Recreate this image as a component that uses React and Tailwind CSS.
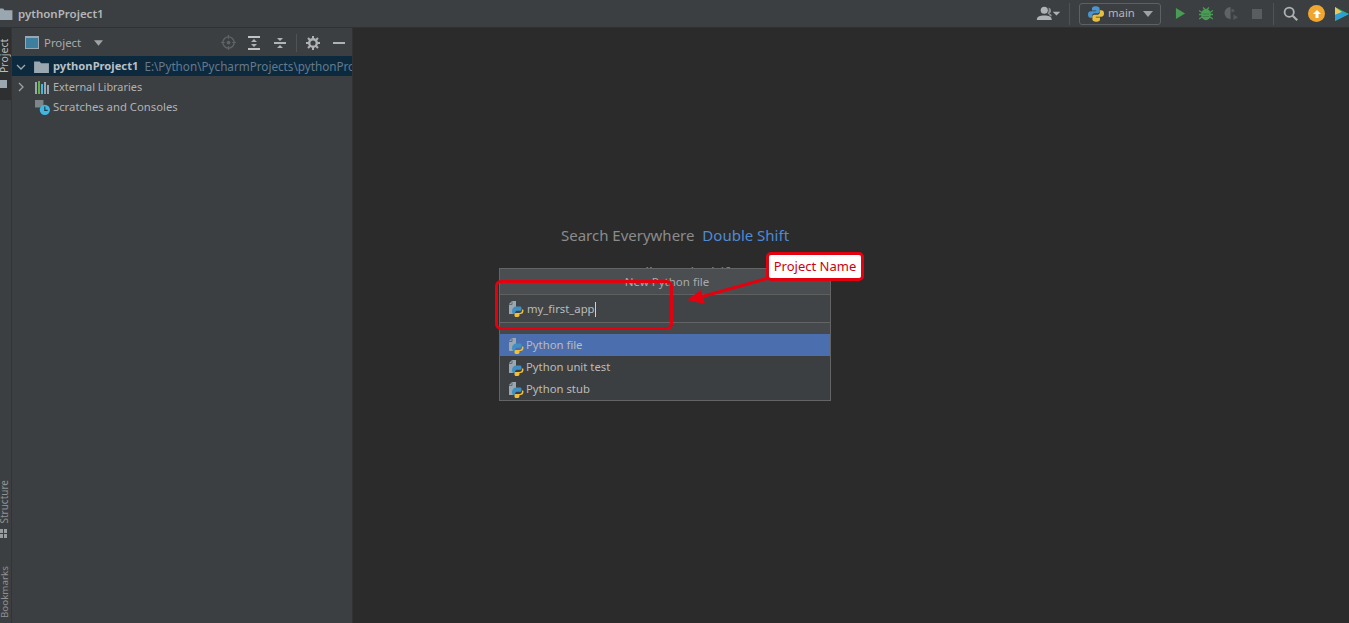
const font = { fontFamily: '"Noto Sans", sans-serif' }

const Folder = ({ className }) => (
    <svg viewBox="0 0 16 14" className={`shrink-0 ${className}`}>
        <path d="M0 1.5h6l1.5 2H16V14H0z" fill="#9aa7b0" />
    </svg>
)

const PyBadge = ({ className }) => (
    <svg viewBox="0 0 16 16" className={`shrink-0 ${className}`}>
        <path d="M1 3l3-3h4v6H6v7H1z" fill="#9aa7b0" />
        <path d="M4 .5v3H1" fill="none" stroke="#5f6a72" strokeWidth="1" />
        <path d="M4 10c0-3 2-4.500 5-4.500h3c1 0 1.500 .6 1.500 1.500v1.500c0 .8-.6 1.300-1.500 1.300H8.500C7.500 10.300 7 11 7 12v1H5.500C4.500 13 4 11.500 4 10z" fill="#3f8fc4" />
        <path d="M15.500 9c0 1-.2 3-1.200 3.500-.8.400-1.800.5-2.800.5v1.200c0 1-.8 1.800-2.200 1.800H8c-1 0-1.500-.6-1.500-1.500v-1c0-1 .6-1.500 1.500-1.500h3.500c1.200 0 2.500-.8 2.500-2.500V8.500h.5c.6 0 1 .2 1 .5z" fill="#f2c037" />
    </svg>
)

const PythonLogo = () => (
    <svg viewBox="0 0 16 16" className="h-[16px] w-[16px] shrink-0">
        <path d="M8 .3c-3.300 0-4 1.300-4 2.500v1.700h4.200v.8H2.800C1.300 5.300 0 6.300 0 8.500s1.200 3.300 2.500 3.300h1.700V9.700c0-1.400 1.100-2.400 2.400-2.400h3c1.100 0 2-.9 2-2V2.800C11.600 1.200 10.300 .3 8 .3z" fill="#4a95cf" />
        <path d="M8 15.700c3.300 0 4-1.300 4-2.500v-1.700H7.800v-.8h5.400c1.500 0 2.800-1 2.800-3.200S14.800 4.200 13.500 4.200h-1.700v2.100c0 1.400-1.100 2.400-2.400 2.400h-3c-1.100 0-2 .9-2 2v2.500c0 1.600 1.300 2.500 3.600 2.500z" fill="#e8c03e" />
    </svg>
)

const popupItems = ["Python file", "Python unit test", "Python stub"]

export default function App() {
    return (
        <div className="flex h-[623px] w-[1349px] flex-col overflow-hidden bg-[#3c3f41] text-[#bbbbbb]" style={font}>
            {/* Title bar */}
            <div className="flex h-[28px] shrink-0 items-center border-b border-[#2f3133] bg-[#3c3f41]">
                <Folder className="ml-[-4px] h-[13px] w-[18px]" />
                <span className="ml-[4px] text-[11.5px] font-semibold text-[#b4b6b8]">pythonProject1</span>
                <div className="ml-auto flex items-center">
                    <svg viewBox="0 0 25 16" className="h-[15px] w-[25px]">
                        <circle cx="8" cy="4.500" r="3.800" fill="#aeb2b5" />
                        <path d="M0 15c0-4 3-5 8-5s8 1 8 5z" fill="#aeb2b5" />
                        <path d="M12.500 1.500a3.500 3.500 0 0 1 1 6.500c1.500 .5 2.500 1.500 2.500 3h-2c-.5-1.500-1.500-2.500-2.500-3 1-1.500 1.500-4 1-6.500z" fill="#8c9093" />
                        <path d="M17 6h8l-4 4z" fill="#aeb2b5" />
                    </svg>
                    <div className="ml-[8px] h-[22px] w-px bg-[#505355]" />
                    <div className="ml-[9px] flex h-[22px] w-[82px] items-center rounded-[3px] border border-[#5e6163] pl-[8px]">
                        <PythonLogo />
                        <span className="ml-[4px] text-[11.300px] text-[#b4b6b8]">main</span>
                        <svg viewBox="0 0 10 6" className="ml-[8px] h-[6px] w-[10px]">
                            <path d="M0 0h10L5 6z" fill="#9ea2a5" />
                        </svg>
                    </div>
                    <svg viewBox="0 0 12 14" className="ml-[14px] h-[13px] w-[11px]">
                        <path d="M1 1l10 6-10 6z" fill="#499c54" />
                    </svg>
                    <svg viewBox="0 0 14 14" className="ml-[13px] h-[15px] w-[14px]">
                        <ellipse cx="7" cy="8" rx="4.800" ry="5.800" fill="#499c54" />
                        <path d="M0 4l3 2M14 4l-3 2M0 8h3M14 8h-3M0 12.500l3-2M14 12.500l-3-2M4 1l2 2M10 1L8 3" stroke="#499c54" strokeWidth="1.300" />
                        <path d="M4 7.500h6M4 10h6" stroke="#3a6f45" strokeWidth=".7" />
                    </svg>
                    <svg viewBox="0 0 16 16" className="ml-[11px] h-[15px] w-[15px]">
                        <path d="M7 1a6 6 0 1 0 0 13z" fill="#5f6365" />
                        <path d="M8 3c2 0 3 1 3.500 2.500L8 7z" fill="#54585a" />
                        <path d="M10 9l5 3-5 3z" fill="#54585a" />
                    </svg>
                    <div className="ml-[13px] h-[10px] w-[10px] bg-[#5a5d5f]" />
                    <div className="ml-[11px] h-[22px] w-px bg-[#505355]" />
                    <svg viewBox="0 0 14 14" className="ml-[9px] h-[15px] w-[15px]">
                        <circle cx="5.800" cy="5.800" r="4.300" fill="none" stroke="#afb1b3" strokeWidth="1.700" />
                        <path d="M9 9l4.300 4.300" stroke="#afb1b3" strokeWidth="2" />
                    </svg>
                    <div className="ml-[10px] flex h-[17px] w-[17px] items-center justify-center rounded-full bg-[#f0a732]">
                        <svg viewBox="0 0 10 10" className="h-[10px] w-[10px]">
                            <path d="M5 1l4 4H6.500v4h-3V5H1z" fill="#ffffff" />
                        </svg>
                    </div>
                    <svg viewBox="0 0 14 16" className="ml-[10px] h-[16px] w-[14px]">
                        <path d="M0 1l14 7-14 7z" fill="#21b573" />
                        <path d="M0 1l7 5-7 3z" fill="#f0c85a" />
                        <path d="M0 9l7-3 7 2-14 7z" fill="#2f9fd8" />
                    </svg>
                </div>
            </div>

            <div className="flex min-h-0 flex-1">
                {/* Left tool stripe */}
                <div className="flex w-[12px] shrink-0 flex-col justify-between overflow-hidden border-r border-[#323436]">
                    <div className="flex h-[72px] w-[11px] flex-col items-start overflow-hidden bg-[#2d2f30] pt-[12px]">
                        <span className="h-[33px] rotate-180 whitespace-nowrap text-[10.500px] leading-[9px] text-[#bbbbbb] [writing-mode:vertical-rl]">Project</span>
                        <div className="mt-[7px] h-[8px] w-[7px] bg-[#9aa7b0]" />
                    </div>
                    <div className="mb-[5px] flex flex-col items-start">
                        <span className="rotate-180 whitespace-nowrap text-[10px] leading-[9px] text-[#8f9294] [writing-mode:vertical-rl]">Structure</span>
                        <div className="mt-[5px] grid w-[7px] grid-cols-2 gap-px">
                            <div className="h-[4px] bg-[#9a9d9f]" />
                            <div className="h-[4px] bg-[#9a9d9f]" />
                            <div className="h-[4px] bg-[#9a9d9f]" />
                            <div className="h-[4px] bg-[#9a9d9f]" />
                        </div>
                        <span className="mt-[28px] rotate-180 whitespace-nowrap text-[9.800px] leading-[9px] text-[#8f9294] [writing-mode:vertical-rl]">Bookmarks</span>
                    </div>
                </div>

                {/* Project panel */}
                <div className="flex w-[340px] shrink-0 flex-col overflow-hidden bg-[#3c3f41]">
                    <div className="flex h-[28px] shrink-0 items-center pl-[13px] pt-[1px]">
                        <div className="h-[13px] w-[14px] border border-[#9aa7b0] border-t-2 bg-[#3d7f9e]" />
                        <span className="ml-[5px] text-[11.400px] text-[#a9abad]">Project</span>
                        <svg viewBox="0 0 10 6" className="ml-[13px] h-[6px] w-[9px]">
                            <path d="M0 0h10L5 6z" fill="#a0a3a5" />
                        </svg>
                        <div className="ml-auto flex items-center pr-[7px]">
                            <svg viewBox="0 0 16 16" className="h-[15px] w-[15px]">
                                <circle cx="8" cy="8" r="6" fill="none" stroke="#5f6365" strokeWidth="1.500" />
                                <circle cx="8" cy="8" r="2" fill="#5f6365" />
                                <path d="M8 0v4M8 12v4M0 8h4M12 8h4" stroke="#5f6365" strokeWidth="1.300" />
                            </svg>
                            <svg viewBox="0 0 14 14" className="ml-[11px] h-[14px] w-[14px]">
                                <path d="M1 1h12M1 13h12" stroke="#c0c2c4" strokeWidth="1.800" />
                                <path d="M7 3l3 3H4zM7 11l3-3H4z" fill="#afb1b3" />
                            </svg>
                            <svg viewBox="0 0 14 14" className="ml-[12px] h-[14px] w-[14px]">
                                <path d="M1 7h12" stroke="#c0c2c4" strokeWidth="1.800" />
                                <path d="M7 5L4 2h6zM7 9l3 3H4z" fill="#afb1b3" />
                            </svg>
                            <div className="ml-[9px] h-[18px] w-px bg-[#505355]" />
                            <svg viewBox="0 0 14 14" className="ml-[9px] h-[14px] w-[14px]">
                                <circle cx="7" cy="7" r="3.800" fill="none" stroke="#afb1b3" strokeWidth="2.400" />
                                <path d="M7 0v3M7 11v3M0 7h3M11 7h3M2 2l2 2M10 10l2 2M12 2l-2 2M4 10l-2 2" stroke="#afb1b3" strokeWidth="2" />
                            </svg>
                            <div className="ml-[13px] h-[2px] w-[12px] bg-[#afb1b3]" />
                        </div>
                    </div>
                    <div className="flex h-[20px] shrink-0 items-center whitespace-nowrap bg-[#0d293e] pl-[4px] pt-[1px] text-[11.200px]">
                        <svg viewBox="0 0 10 6" className="h-[6px] w-[10px] shrink-0">
                            <path d="M1 1l4 4 4-4" fill="none" stroke="#a0a8ae" strokeWidth="1.300" />
                        </svg>
                        <Folder className="ml-[8px] h-[13px] w-[15px]" />
                        <span className="ml-[4px] font-bold text-[#b9c0c6]">pythonProject1</span>
                        <span className="ml-[6px] text-[11.700px] text-[#66798a]">E:\Python\PycharmProjects\pythonProject1</span>
                    </div>
                    <div className="flex h-[20px] shrink-0 items-center pl-[6px] pt-[2px] text-[10.900px]">
                        <svg viewBox="0 0 6 10" className="h-[10px] w-[6px] shrink-0">
                            <path d="M1 1l4 4-4 4" fill="none" stroke="#a0a3a5" strokeWidth="1.300" />
                        </svg>
                        <div className="ml-[11px] flex h-[13px] items-end gap-[1px]">
                            <div className="h-[12px] w-[2px] bg-[#9aa7b0]" />
                            <div className="h-[13px] w-[2px] bg-[#62b543]" />
                            <div className="h-[10px] w-[2px] bg-[#40b6e0]" />
                            <div className="h-[12px] w-[2px] bg-[#9aa7b0]" />
                            <div className="h-[9px] w-[2px] bg-[#9aa7b0]" />
                        </div>
                        <span className="ml-[4px] text-[#b0b2b4]">External Libraries</span>
                    </div>
                    <div className="flex h-[20px] shrink-0 items-center pl-[23px] pt-[2px] text-[11.300px]">
                        <svg viewBox="0 0 16 16" className="h-[15px] w-[15px] shrink-0">
                            <path d="M0 0h9v8H0z" fill="#7d8689" />
                            <circle cx="10.500" cy="10.500" r="5.500" fill="#40b6e0" />
                            <path d="M10.500 7v4h3" fill="none" stroke="#1f3a48" strokeWidth="1.200" />
                        </svg>
                        <span className="ml-[3px] text-[#b0b2b4]">Scratches and Consoles</span>
                    </div>
                </div>

                {/* Editor */}
                <div className="relative min-w-0 flex-1 border-l border-[#323232] bg-[#2b2b2b]">
                    <div className="flex flex-col items-center pr-[352px] pt-[196px] text-[15px] leading-[22px] text-[#8a8c8e]">
                        <div className="whitespace-nowrap">
                            Search Everywhere <span className="ml-[4px] text-[#4f8ad6]">Double Shift</span>
                        </div>
                        <div className="mt-[15px] whitespace-nowrap">
                            Go to File <span className="ml-[4px] text-[#4f8ad6]">Ctrl+Shift+N</span>
                        </div>
                    </div>

                    {/* New file popup */}
                    <div className="absolute left-[146px] top-[240px] w-[332px] border border-[#646464] bg-[#3c3f41] text-[11.300px]">
                        <div className="flex h-[26px] items-center justify-center border-b border-[#5e6060] bg-[#4b4e50] pl-[4px] text-[11.500px] text-[#a8aaac]">New Python file</div>
                        <div className="flex h-[28px] items-center border-b border-[#646464] bg-[#414446] pl-[8px] pt-[1px] text-[#bbbbbb]">
                            <PyBadge className="h-[16px] w-[16px]" />
                            <span className="ml-[3px]">my_first_app</span>
                            <div className="h-[15px] w-px bg-[#d0d0d0]" />
                        </div>
                        <div className="h-[11px] bg-[#46494b]" />
                        {popupItems.map((item, i) => (
                            <div key={item} className={`flex h-[22px] items-center pl-[8px] pt-[1px] ${i === 0 ? "bg-[#4b6eaf]" : ""}`}>
                                <PyBadge className="h-[16px] w-[16px]" />
                                <span className="ml-[2px]">{item}</span>
                            </div>
                        ))}
                    </div>

                    {/* Annotations */}
                    <div className="absolute left-[142px] top-[252px] h-[50px] w-[178px] rounded-[6px] border-[3px] border-[#e3000f]" />
                    <div className="absolute left-[413px] top-[224px] flex h-[29px] w-[98px] items-center justify-center rounded-[5px] border-[3px] border-[#e3000f] bg-white text-[13px] text-[#d0000f]">
                        Project Name
                    </div>
                    <svg viewBox="0 0 100 40" className="absolute left-[330px] top-[243px] h-[40px] w-[100px]">
                        <path d="M86 7L14 27" stroke="#e3000f" strokeWidth="3" />
                        <path d="M4 29l14-10 4 14z" fill="#e3000f" />
                    </svg>
                </div>
            </div>
        </div>
    )
}
